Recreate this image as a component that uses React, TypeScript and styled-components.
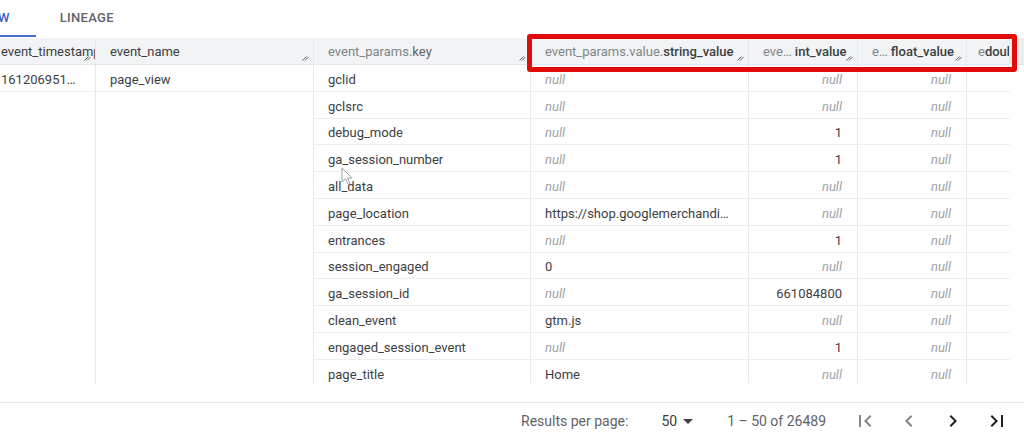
import React from "react";
import styled, { createGlobalStyle } from "styled-components";
import { MdArrowDropDown, MdFirstPage, MdChevronLeft, MdChevronRight, MdLastPage } from "react-icons/md";

const GlobalStyle = createGlobalStyle`
  html, body {
    margin: 0;
    padding: 0;
    background: #ffffff;
  }
  body {
    font-family: Roboto, "Liberation Sans", Arial, sans-serif;
    -webkit-font-smoothing: antialiased;
  }
`;

const HEAD_COLS = "96px 218px 217px 218px 109px 109px 43px 14px";
const BODY_COLS = "96px 218px 217px 218px 109px 109px 43px";

const Page = styled.div`
  position: relative;
  width: 1024px;
  height: 435px;
  overflow: hidden;
  display: flex;
  flex-direction: column;
  color: #3c4043;
`;

const TabBar = styled.div`
  display: flex;
  height: 38px;
  flex-shrink: 0;
  margin-left: -71px;
`;

const Tab = styled.div<{ $active?: boolean }>`
  display: flex;
  align-items: center;
  padding: 0 26px 0 24px;
  font-size: 13px;
  font-weight: 500;
  letter-spacing: 0.3px;
  color: ${(p) => (p.$active ? "#3b5fb8" : "#5f6368")};
  border-bottom: 2px solid ${(p) => (p.$active ? "#4a6fc9" : "transparent")};
  box-sizing: border-box;
  margin-bottom: 1px;
`;

const HeaderRow = styled.div`
  display: grid;
  grid-template-columns: ${HEAD_COLS};
  height: 27px;
  flex-shrink: 0;
  background: #f1f3f4;
  border-bottom: 1px solid #e4e6e8;
  box-sizing: border-box;
`;

const HeadCell = styled.div<{ $flush?: boolean; $tight?: boolean }>`
  position: relative;
  display: flex;
  align-items: center;
  padding: 1px 14px 0 ${(p) => (p.$flush ? "1px" : p.$tight ? "11px" : "14px")};
  font-size: 13px;
  white-space: nowrap;
  overflow: hidden;
  border-right: 1px solid #e6e8ea;
  box-sizing: border-box;
  color: #3c4043;
`;

const HeadFiller = styled.div`
  background: #ebedef;
`;

const Prefix = styled.span`
  color: #80868b;
`;

const SubField = styled.span`
  color: #5f6368;
`;

const Field = styled.span`
  color: #3c4043;
  font-weight: 500;
`;

const Handle = styled.svg`
  position: absolute;
  right: 4px;
  bottom: 3px;
  width: 7px;
  height: 7px;
`;

const Body = styled.div`
  height: 318px;
  flex-shrink: 0;
  overflow: hidden;
`;

const Row = styled.div`
  display: grid;
  grid-template-columns: ${BODY_COLS};
  width: 1010px;
  height: 26.8px;
`;

const Cell = styled.div<{ $bare?: boolean; $right?: boolean; $flush?: boolean; $last?: boolean }>`
  display: flex;
  align-items: center;
  justify-content: ${(p) => (p.$right ? "flex-end" : "flex-start")};
  padding: 3px 15px 0 ${(p) => (p.$flush ? "1px" : "14px")};
  font-size: 13px;
  color: #3c4043;
  white-space: nowrap;
  overflow: hidden;
  box-sizing: border-box;
  border-right: ${(p) => (p.$last ? "none" : "1px solid #e8eaed")};
  border-bottom: ${(p) => (p.$bare ? "none" : "1px solid #eceef0")};
`;

const CellText = styled.span`
  overflow: hidden;
  text-overflow: ellipsis;
`;

const Null = styled.span`
  font-style: italic;
  color: #9ea2a7;
`;

const Footer = styled.div`
  display: flex;
  align-items: center;
  justify-content: flex-end;
  height: 33px;
  margin-top: 19px;
  padding-top: 2px;
  border-top: 1px solid #e2e4e6;
  padding-right: 5px;
  font-size: 14px;
  color: #5f6368;
`;

const Label = styled.span`
  margin-right: 33px;
`;

const PageSize = styled.div`
  display: flex;
  align-items: center;
  color: #3c4043;
`;

const Range = styled.span`
  margin-left: 27px;
  margin-right: 17px;
`;

const NavButton = styled.button<{ $disabled?: boolean }>`
  display: flex;
  align-items: center;
  justify-content: center;
  width: 44px;
  height: 32px;
  padding: 0;
  border: none;
  background: none;
  color: ${(p) => (p.$disabled ? "#80868b" : "#202124")};
  cursor: pointer;
`;

const Highlight = styled.div`
  position: absolute;
  left: 527px;
  top: 34px;
  width: 490px;
  height: 38px;
  border: 5px solid #e10b0b;
  border-radius: 3px;
  box-sizing: border-box;
  pointer-events: none;
`;

const Pointer = styled.svg`
  position: absolute;
  left: 341px;
  top: 167px;
  width: 13px;
  height: 20px;
  pointer-events: none;
`;

type Val = string | null;

interface Param {
  key: string;
  str: Val;
  int: Val;
  float: Val;
}

const params: Param[] = [
  { key: "gclid", str: null, int: null, float: null },
  { key: "gclsrc", str: null, int: null, float: null },
  { key: "debug_mode", str: null, int: "1", float: null },
  { key: "ga_session_number", str: null, int: "1", float: null },
  { key: "all_data", str: null, int: null, float: null },
  { key: "page_location", str: "https://shop.googlemerchandi…", int: null, float: null },
  { key: "entrances", str: null, int: "1", float: null },
  { key: "session_engaged", str: "0", int: null, float: null },
  { key: "ga_session_id", str: null, int: "661084800", float: null },
  { key: "clean_event", str: "gtm.js", int: null, float: null },
  { key: "engaged_session_event", str: null, int: "1", float: null },
  { key: "page_title", str: "Home", int: null, float: null },
];

const ResizeHandle = () => (
  <Handle viewBox="0 0 7 7">
    <line x1="0.5" y1="6.5" x2="4.5" y2="2.5" stroke="#5f6368" strokeWidth="1" />
    <line x1="3" y1="6.5" x2="6.5" y2="3" stroke="#5f6368" strokeWidth="1" />
  </Handle>
);

const show = (v: Val) => (v === null ? <Null>null</Null> : <CellText>{v}</CellText>);

const App: React.FC = () => {
  return (
    <Page>
      <GlobalStyle />
      <TabBar>
        <Tab $active>PREVIEW</Tab>
        <Tab>LINEAGE</Tab>
      </TabBar>

      <HeaderRow>
        <HeadCell $flush>
          event_timestamp
          <ResizeHandle />
        </HeadCell>
        <HeadCell>
          event_name
          <ResizeHandle />
        </HeadCell>
        <HeadCell>
          <Prefix>event_params.</Prefix>
          <SubField>key</SubField>
          <ResizeHandle />
        </HeadCell>
        <HeadCell>
          <Prefix>event_params.value.</Prefix>
          <Field>string_value</Field>
          <ResizeHandle />
        </HeadCell>
        <HeadCell>
          <Prefix>eve…&nbsp;</Prefix>
          <Field>int_value</Field>
          <ResizeHandle />
        </HeadCell>
        <HeadCell>
          <Prefix>e…&nbsp;</Prefix>
          <Field>float_value</Field>
          <ResizeHandle />
        </HeadCell>
        <HeadCell $tight>
          <Prefix>e</Prefix>
          <Field>double_value</Field>
        </HeadCell>
        <HeadFiller />
      </HeaderRow>

      <Body>
        {params.map((p, i) => (
          <Row key={p.key}>
            <Cell $flush $bare={i > 0}>
              {i === 0 && <CellText>161206951…</CellText>}
            </Cell>
            <Cell $bare={i > 0}>{i === 0 && <CellText>page_view</CellText>}</Cell>
            <Cell>
              <CellText>{p.key}</CellText>
            </Cell>
            <Cell>{show(p.str)}</Cell>
            <Cell $right>{show(p.int)}</Cell>
            <Cell $right>{show(p.float)}</Cell>
            <Cell $last />
          </Row>
        ))}
      </Body>

      <Footer>
        <Label>Results per page:</Label>
        <PageSize>
          50
          <MdArrowDropDown size={24} style={{ marginLeft: -1 }} />
        </PageSize>
        <Range>1 – 50 of 26489</Range>
        <NavButton $disabled>
          <MdFirstPage size={24} />
        </NavButton>
        <NavButton $disabled>
          <MdChevronLeft size={24} />
        </NavButton>
        <NavButton>
          <MdChevronRight size={24} />
        </NavButton>
        <NavButton>
          <MdLastPage size={24} />
        </NavButton>
      </Footer>

      <Highlight />
      <Pointer viewBox="0 0 13 20">
        <path
          d="M1 1 L1 15 L4.5 11.8 L7 17.5 L9 16.6 L6.6 11 L11 11 Z"
          fill="#ffffff"
          fillOpacity="0.6"
          stroke="#9aa0a6"
          strokeWidth="1"
          strokeLinejoin="round"
        />
      </Pointer>
    </Page>
  );
};

export default App;
